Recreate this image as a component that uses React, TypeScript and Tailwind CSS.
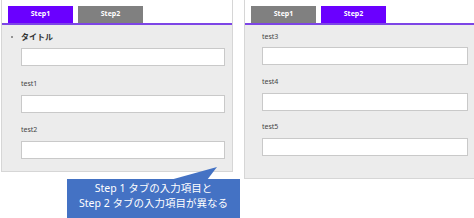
import React from "react";

const jp = { fontFamily: '"Noto Sans", "Noto Sans CJK JP", sans-serif' };

function Tabs({ active }: { active: 1 | 2 }) {
  const tab = (n: 1 | 2) => (
    <div
      className={`flex h-[17px] w-[65px] items-center justify-center text-[7px] font-bold text-white ${
        n === active ? "bg-[#6a00ff]" : "bg-[#808080]"
      }`}
    >
      Step{n}
    </div>
  );
  return (
    <div className="flex gap-[5px] bg-white pl-[6px] pt-[6px]">
      {tab(1)}
      {tab(2)}
    </div>
  );
}

function Field({ label, mt }: { label: string; mt: string }) {
  return (
    <div className={`flex flex-col ${mt}`}>
      <div className="h-[12px] text-[7px] leading-[12px] text-[#444]">{label}</div>
      <div className="mt-[5px] h-[18px] border border-[#c9c9c9] bg-white" />
    </div>
  );
}

export default function App() {
  return (
    <div className="relative flex h-[218px] w-[474px] overflow-hidden bg-white" style={jp}>
      {/* Step1 panel */}
      <div className="ml-[1px] flex h-[172px] w-[232px] flex-col border-x border-b border-[#d6d6d6]">
        <Tabs active={1} />
        <div className="h-[2px] bg-[#7d45e6]" />
        <div className="flex flex-1 flex-col bg-[#ececec] pl-[19px] pr-[7px] pt-[5px]">
          <div className="relative flex h-[14px] items-center text-[8px] font-bold text-[#333]">
            <span className="absolute left-[-10px] top-[6px] h-[2px] w-[2px] rounded-full bg-[#777]" />
            タイトル
          </div>
          <div className="mt-[4px] h-[18px] border border-[#c9c9c9] bg-white" />
          <Field label="test1" mt="mt-[12px]" />
          <Field label="test2" mt="mt-[11px]" />
        </div>
      </div>

      {/* Step2 panel */}
      <div className="ml-[11px] flex h-[179px] flex-1 flex-col border-l border-b border-[#d6d6d6]">
        <Tabs active={2} />
        <div className="h-[2px] bg-[#7d45e6]" />
        <div className="flex flex-1 flex-col bg-[#ececec] pl-[17px] pr-[6px] pt-[6px]">
          <div className="flex flex-col">
            <div className="h-[12px] text-[7px] leading-[12px] text-[#444]">test3</div>
            <div className="mt-[4px] h-[18px] border border-[#c9c9c9] bg-white" />
          </div>
          <Field label="test4" mt="mt-[11px]" />
          <Field label="test5" mt="mt-[10px]" />
        </div>
      </div>

      {/* callout */}
      <svg className="absolute left-0 top-0" width="474" height="218">
        <polygon points="170,180 217,167 207,180" fill="#4472c4" />
      </svg>
      <div
        className="absolute left-[67px] top-[179px] h-[39px] w-[173px] bg-[#4472c4] pt-[2px] text-center text-[10.5px] leading-[15px] text-white"
        style={jp}
      >
        <div>Step 1 タブの入力項目と</div>
        <div>Step 2 タブの入力項目が異なる</div>
      </div>
    </div>
  );
}
